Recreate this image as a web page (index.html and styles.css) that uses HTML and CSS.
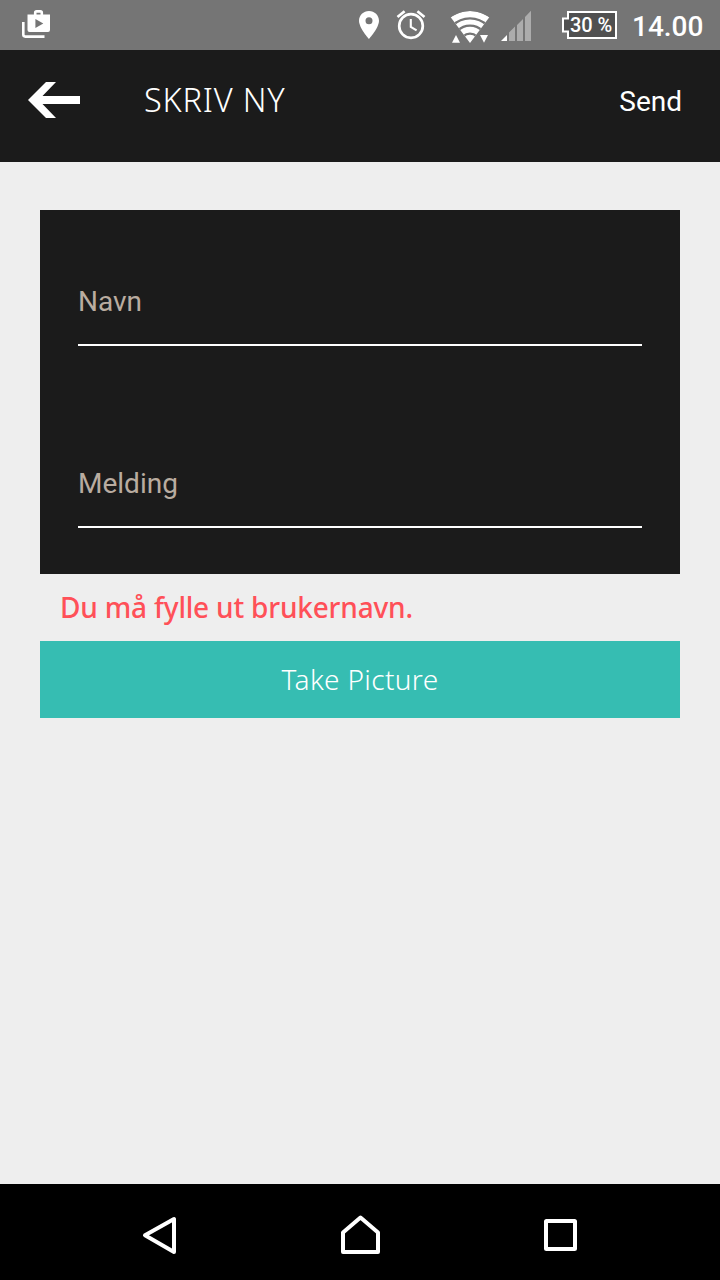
FILE: index.html
```html
<!DOCTYPE html>
<html lang="no">
<head>
<meta charset="utf-8">
<meta name="viewport" content="width=device-width, initial-scale=1">
<title>Skriv ny</title>
<link rel="stylesheet" href="styles.css">
</head>
<body>
<div class="screen">
  <div class="status-bar">
    <svg class="status-shop" width="28" height="28" viewBox="0 0 28 28">
      <path d="M1.3 12V24.6Q1.3 26.6 3.3 26.6H22.5" fill="none" stroke="#fff" stroke-width="2.6"/>
      <path d="M13.2 5V2.8Q13.2 1.4 14.6 1.4H18.4Q19.8 1.4 19.8 2.8V5" fill="none" stroke="#fff" stroke-width="2.6"/>
      <path fill-rule="evenodd" fill="#fff" d="M5.5 4.5H28V20Q28 22 26 22H7.5Q5.5 22 5.5 20ZM13.4 9V18L21.3 13.5Z"/>
    </svg>
    <svg class="status-pin" width="20" height="28" viewBox="0 0 20 28">
      <path fill="#fff" fill-rule="evenodd" d="M10 0C4.4 0 0 4.4 0 9.8C0 17 10 28 10 28S20 17 20 9.8C20 4.4 15.6 0 10 0ZM10 6.3A3.5 3.5 0 1 1 10 13.3A3.5 3.5 0 1 1 10 6.3Z"/>
    </svg>
    <svg class="status-alarm" width="30" height="30" viewBox="0 0 30 30">
      <g fill="none" stroke="#fff" stroke-width="2.7">
        <circle cx="14" cy="16" r="11.8"/>
        <path d="M.5 7L7.6 1.2M20.4 1.2L27.5 7"/>
        <path d="M13.8 9V16.8L19.6 20.3" stroke-width="2.1"/>
      </g>
    </svg>
    <svg class="status-wifi" width="40" height="33" viewBox="0 0 40 33">
      <defs><clipPath id="fan"><path d="M20 33L.5 7Q20-5 39.5 7Z"/></clipPath></defs>
      <g clip-path="url(#fan)">
        <circle cx="20" cy="33" r="32" fill="#fff"/>
        <g fill="none" stroke="#757575" stroke-width="2.3">
          <circle cx="20" cy="33" r="24.7"/>
          <circle cx="20" cy="33" r="17.4"/>
          <circle cx="20" cy="33" r="9.4"/>
        </g>
      </g>
      <path fill="#fff" d="M2 32.7L6 25L10 32.7ZM30 25H38L34 32.7Z"/>
    </svg>
    <svg class="status-signal" width="31" height="31" viewBox="0 0 31 31">
      <path fill="#fff" d="M-1 31L5 25V31Z"/>
      <path fill="#acacac" d="M7 31V22.5L13 16.5V31ZM15 31V15L21 9V31ZM23 31V7L29 .8V31Z"/>
    </svg>
    <div class="battery">
      <svg class="battery-shape" width="56" height="28" viewBox="0 0 56 28">
        <path d="M6 1H54V27H6V20.5H1V7.5H6Z" fill="#505050" stroke="#fff" stroke-width="2"/>
      </svg>
      <span class="battery-level">30 %</span>
    </div>
    <span class="clock">14.00</span>
  </div>

  <header class="app-bar">
    <svg class="back" width="52" height="36" viewBox="0 0 52 36">
      <path fill="#fff" d="M0 18L18 0H28L14.5 14H52V22H14.5L28 36H18Z"/>
    </svg>
    <h1 class="title">SKRIV NY</h1>
    <span class="send">Send</span>
  </header>

  <main class="content">
    <form class="form">
      <div class="field">Navn</div>
      <div class="field">Melding</div>
    </form>
    <p class="error">Du må fylle ut brukernavn.</p>
    <div class="picture-button">Take Picture</div>
  </main>

  <nav class="nav-bar">
    <svg class="nav-back" width="36" height="40" viewBox="0 0 36 40">
      <path d="M33 4V37L4 20.3Z" fill="none" stroke="#fff" stroke-width="4" stroke-linejoin="round"/>
    </svg>
    <svg class="nav-home" width="40" height="40" viewBox="0 0 40 40">
      <path d="M3 37V17.5L20.5 2.5L38 17.5V37Z" fill="none" stroke="#fff" stroke-width="4" stroke-linejoin="round"/>
    </svg>
    <svg class="nav-recent" width="33" height="32" viewBox="0 0 33 32">
      <rect x="2" y="2" width="29" height="28" rx=".5" fill="none" stroke="#fff" stroke-width="4" stroke-linejoin="round"/>
    </svg>
  </nav>
</div>
</body>
</html>
```
FILE: styles.css
```css
* {
  box-sizing: border-box;
}

body {
  margin: 0;
  background: #eee;
  font-family: Roboto, "Liberation Sans", sans-serif;
}

.screen {
  display: flex;
  flex-direction: column;
  width: 720px;
  height: 1280px;
  overflow: hidden;
}

svg {
  display: block;
  flex: none;
  overflow: visible;
}

.status-bar {
  display: flex;
  align-items: flex-start;
  height: 50px;
  padding: 10px 16px 0 22px;
  background: #757575;
  color: #fff;
}

.status-pin {
  margin: 1px 0 0 309px;
}

.status-alarm {
  margin-left: 18px;
}

.status-wifi {
  margin-left: 23px;
}

.status-signal {
  margin-left: 12px;
}

.battery {
  display: grid;
  width: 56px;
  height: 28px;
  margin: 1px 0 0 29px;
}

.battery-shape,
.battery-level {
  grid-area: 1 / 1;
}

.battery-level {
  padding-left: 8px;
  font-size: 20px;
  font-weight: 500;
  line-height: 28px;
  letter-spacing: -0.1px;
  white-space: nowrap;
}

.clock {
  margin-left: 14px;
  font-size: 28px;
  font-weight: 500;
  line-height: 33px;
}

.app-bar {
  display: flex;
  align-items: center;
  height: 112px;
  padding: 0 38px 12px 28px;
  background: #1b1b1b;
  color: #fff;
}

.title {
  margin: 0 auto 0 64px;
  font-family: "Noto Sans", sans-serif;
  font-size: 32.5px;
  font-weight: 300;
  line-height: 44px;
  letter-spacing: 0.8px;
}

.send {
  padding-top: 2px;
  font-size: 28px;
  line-height: 33px;
}

.content {
  flex: 1;
  padding: 48px 40px 0;
}

.form {
  height: 364px;
  padding: 56px 38px 0;
  background: #1b1b1b;
}

.field {
  height: 80px;
  margin-bottom: 102px;
  padding-top: 19px;
  border-bottom: 2px solid #fff;
  color: #b9aca0;
  font-size: 28px;
  line-height: 33px;
}

.error {
  height: 67px;
  margin: 0;
  padding: 0 20px;
  color: #ff5058;
  font-family: "Noto Sans", sans-serif;
  font-size: 28px;
  font-weight: 500;
  line-height: 66px;
  letter-spacing: -0.19px;
}

.picture-button {
  height: 77px;
  background: #36bdb2;
  color: #fff;
  font-family: "Noto Sans", sans-serif;
  font-size: 28px;
  font-weight: 300;
  line-height: 77px;
  letter-spacing: 0.35px;
  text-align: center;
}

.nav-bar {
  display: flex;
  align-items: flex-start;
  height: 96px;
  padding: 31px 0 0 141px;
  background: #000;
}

.nav-home {
  margin-left: 163px;
}

.nav-recent {
  margin: 4px 0 0 164px;
}
```
